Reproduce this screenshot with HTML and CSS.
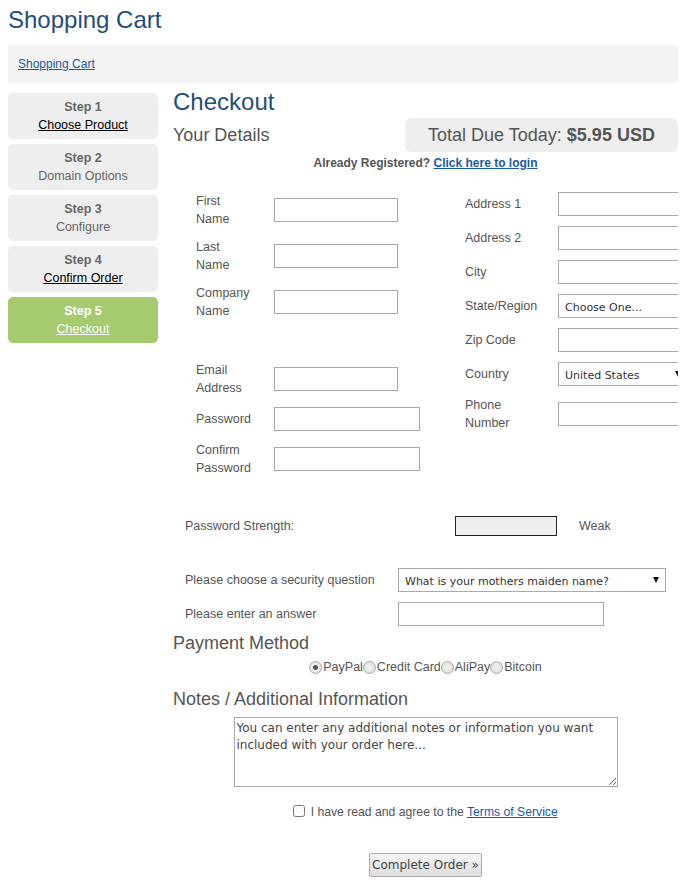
FILE: index.html
```html
<!DOCTYPE html>
<html lang="en">
  <head>
    <meta charset="UTF-8" />
    <meta name="viewport" content="width=device-width, initial-scale=1.0" />
    <title>Shopping Cart</title>
    <link rel="stylesheet" href="styles.css">
  </head>
  <body>
    <h1 class="page-title">Shopping Cart</h1>

    <div class="breadcrumb">
      <a href="#">Shopping Cart</a>
    </div>

    <div class="cart">
      <ul class="steps">
        <li class="step">
          <strong>Step 1</strong>
          <a href="#">Choose Product</a>
        </li>
        <li class="step">
          <strong>Step 2</strong>
          <span>Domain Options</span>
        </li>
        <li class="step">
          <strong>Step 3</strong>
          <span>Configure</span>
        </li>
        <li class="step">
          <strong>Step 4</strong>
          <a href="#">Confirm Order</a>
        </li>
        <li class="step active">
          <strong>Step 5</strong>
          <a href="#">Checkout</a>
        </li>
      </ul>

      <section class="checkout">
        <h2>Checkout</h2>

        <div class="details-head">
          <h3>Your Details</h3>
          <div class="total">Total Due Today: <strong>$5.95 USD</strong></div>
        </div>

        <p class="login">Already Registered? <a href="#">Click here to login</a></p>

        <form>
          <div class="columns">
            <div class="col-left">
              <p class="row">
                <label for="firstName">First<br />Name</label>
                <input type="text" id="firstName" />
              </p>
              <p class="row">
                <label for="lastName">Last<br />Name</label>
                <input type="text" id="lastName" />
              </p>
              <p class="row">
                <label for="company">Company<br />Name</label>
                <input type="text" id="company" />
              </p>
              <p class="row tight spaced">
                <label for="email">Email<br />Address</label>
                <input type="text" id="email" />
              </p>
              <p class="row tight">
                <label for="password">Password</label>
                <input type="password" id="password" class="wide" />
              </p>
              <p class="row tight">
                <label for="password2">Confirm<br />Password</label>
                <input type="password" id="password2" class="wide" />
              </p>
            </div>

            <div class="col-right">
              <p class="row">
                <label for="address1">Address 1</label>
                <input type="text" id="address1" />
              </p>
              <p class="row">
                <label for="address2">Address 2</label>
                <input type="text" id="address2" />
              </p>
              <p class="row">
                <label for="city">City</label>
                <input type="text" id="city" />
              </p>
              <p class="row">
                <label for="state">State/Region</label>
                <span class="select-wrap">
                  <select id="state" class="state">
                    <option>Choose One...</option>
                  </select>
                </span>
              </p>
              <p class="row">
                <label for="zip">Zip Code</label>
                <input type="text" id="zip" />
              </p>
              <p class="row">
                <label for="country">Country</label>
                <span class="select-wrap">
                  <select id="country" class="country">
                    <option>United States</option>
                  </select>
                </span>
              </p>
              <p class="row phone">
                <label for="phone">Phone<br />Number</label>
                <input type="text" id="phone" />
              </p>
            </div>
          </div>

          <div class="strength">
            <span class="strength-label">Password Strength:</span>
            <span class="strength-bar"></span>
            <span class="strength-text">Weak</span>
          </div>

          <p class="question first">
            <label for="question">Please choose a security question</label>
            <span class="select-wrap">
              <select id="question" class="question-select">
                <option>What is your mothers maiden name?</option>
              </select>
            </span>
          </p>
          <p class="question">
            <label for="answer">Please enter an answer</label>
            <input type="text" id="answer" class="answer" />
          </p>

          <h3 class="payment-title">Payment Method</h3>
          <p class="payment">
            <input type="radio" id="paypal" name="payment" checked /><label for="paypal">PayPal</label>
            <input type="radio" id="card" name="payment" /><label for="card">Credit Card</label>
            <input type="radio" id="alipay" name="payment" /><label for="alipay">AliPay</label>
            <input type="radio" id="bitcoin" name="payment" /><label for="bitcoin">Bitcoin</label>
          </p>

          <h3 class="notes-title">Notes / Additional Information</h3>
          <p class="notes">
            <textarea rows="4">You can enter any additional notes or information you want included with your order here...</textarea>
          </p>

          <p class="agree">
            <input type="checkbox" id="tos" />
            <label for="tos">I have read and agree to the <a href="#">Terms of Service</a></label>
          </p>

          <p class="submit">
            <button type="button" class="button">Complete Order &raquo;</button>
          </p>
        </form>
      </section>
    </div>
  </body>
</html>
```

FILE: styles.css
```css
html {
  overflow: hidden;
}

body {
  font-family: "Liberation Sans", Arial, sans-serif;
  font-size: 12.5px;
  color: #555;
  background-color: #fff;
  margin: 8px;
  width: 670px;
}

a {
  color: #1a5aa8;
}

.page-title {
  font-size: 24px;
  font-weight: normal;
  color: #1f4e7d;
  margin: 0 0 13px;
  line-height: 24px;
}

.breadcrumb {
  background-color: #f3f3f3;
  height: 38px;
  line-height: 38px;
  padding: 0 10px;
  font-size: 12px;
}

.cart {
  display: flex;
  margin-top: 10px;
}

.steps {
  list-style: none;
  margin: 0;
  padding: 0;
  width: 150px;
  flex-shrink: 0;
}

.step {
  background-color: #eee;
  border-radius: 5px;
  height: 46px;
  margin-bottom: 5px;
  padding-top: 5px;
  box-sizing: border-box;
  text-align: center;
  font-size: 12.5px;
  line-height: 18px;
  color: #666;
}

.step strong,
.step span,
.step a {
  display: block;
}

.step a {
  color: #000;
}

.step.active {
  background-color: #a6ca6e;
  color: #fff;
}

.step.active a {
  color: #fff;
}

.checkout {
  margin-left: 15px;
  flex: 1;
  min-width: 0;
}

.checkout h2 {
  font-size: 24px;
  font-weight: normal;
  color: #1f4e7d;
  margin: -5px 0 0;
  line-height: 28px;
}

.checkout h3 {
  font-size: 18px;
  font-weight: normal;
  color: #555;
  margin: 0;
  line-height: 20px;
}

.details-head {
  display: flex;
  justify-content: space-between;
  align-items: center;
  margin-top: 2px;
}

.total {
  background-color: #eee;
  border-radius: 6px;
  width: 273px;
  height: 34px;
  line-height: 34px;
  text-align: center;
  font-size: 18px;
  color: #555;
}

.login {
  text-align: center;
  font-size: 12px;
  font-weight: bold;
  margin: 4px 0 0;
  line-height: 14px;
}

.login a {
  color: #1a5aa8;
}

form p {
  margin: 0;
}

.columns {
  display: flex;
  margin-top: 17px;
}

.col-left {
  width: 280px;
  flex-shrink: 0;
  padding-left: 23px;
  box-sizing: border-box;
}

.col-right {
  padding-left: 12px;
}

.row {
  display: flex;
  align-items: center;
  height: 46px;
}

.col-left label {
  width: 78px;
  line-height: 18px;
  flex-shrink: 0;
}

.col-left .row.tight {
  height: 40px;
}

.col-left .row.spaced {
  margin-top: 34px;
}

.col-right .row {
  height: 34px;
}

.col-right .row.phone {
  height: 46px;
}

.col-right label {
  width: 93px;
  line-height: 18px;
  flex-shrink: 0;
}

input[type="text"],
input[type="password"] {
  width: 124px;
  height: 24px;
  box-sizing: border-box;
  border: 1px solid #aaa;
  margin: 0;
  padding: 2px 4px;
  flex-shrink: 0;
}

.col-right input[type="text"] {
  width: 126px;
}

input.wide {
  width: 146px;
}

.select-wrap {
  position: relative;
  display: inline-block;
  flex-shrink: 0;
}

.select-wrap::after {
  content: "";
  position: absolute;
  right: 7px;
  top: 9px;
  border-left: 3px solid transparent;
  border-right: 3px solid transparent;
  border-top: 6px solid #111;
  pointer-events: none;
}

select {
  appearance: none;
  display: block;
  height: 24px;
  box-sizing: border-box;
  border: 1px solid #aaa;
  border-radius: 0;
  background-color: #fff;
  font-family: "DejaVu Sans", Verdana, sans-serif;
  font-size: 11px;
  color: #333;
  padding: 2px 6px 0;
  margin: 0;
}

.state {
  width: 150px;
}

.country {
  width: 130px;
}

.question-select {
  width: 268px;
}

.strength {
  display: flex;
  align-items: center;
  margin: 37px 0 0 12px;
}

.strength-label {
  width: 270px;
}

.strength-bar {
  width: 102px;
  height: 20px;
  box-sizing: border-box;
  background-color: #eee;
  border: 1px solid #222;
}

.strength-text {
  margin-left: 22px;
}

.question {
  display: flex;
  align-items: center;
  padding-left: 12px;
  height: 34px;
}

.question.first {
  margin-top: 27px;
}

.question label {
  width: 213px;
  flex-shrink: 0;
}

input.answer {
  width: 206px;
}

.checkout .payment-title {
  margin-top: 2px;
}

.payment {
  display: flex;
  justify-content: center;
  align-items: center;
  height: 24px;
  margin-top: 2px;
  font-size: 12.5px;
}

.payment input {
  appearance: none;
  width: 13px;
  height: 13px;
  margin: 0 1px 0 0;
  border: 1px solid #aaa;
  border-radius: 50%;
  background: radial-gradient(circle, #f4f4f4 0, #d8d8d8 100%);
}

.payment input:checked {
  background: radial-gradient(circle, #555 0, #555 2px, #eee 3px, #d8d8d8 100%);
}

.checkout .notes-title {
  margin-top: 10px;
}

.notes {
  text-align: center;
  margin-top: 8px;
}

textarea {
  width: 384px;
  height: 70px;
  box-sizing: border-box;
  border: 1px solid #aaa;
  font-family: "DejaVu Sans", Verdana, sans-serif;
  font-size: 12px;
  line-height: 17px;
  color: #444;
  padding: 2px 2px;
  margin: 0;
  vertical-align: top;
  resize: both;
}

.agree {
  text-align: center;
  margin-top: 18px;
  font-size: 12.2px;
}

.agree input {
  width: 12px;
  height: 12px;
  margin: 0 2px 0 0;
  vertical-align: -1px;
}

.submit {
  text-align: center;
  margin-top: 34px;
}

.button {
  font-family: "DejaVu Sans", Verdana, sans-serif;
  font-size: 12px;
  color: #444;
  background: linear-gradient(#f6f6f6, #ddd);
  border: 1px solid #aaa;
  border-radius: 2px;
  height: 24px;
  padding: 0 2px;
  cursor: pointer;
}
```
